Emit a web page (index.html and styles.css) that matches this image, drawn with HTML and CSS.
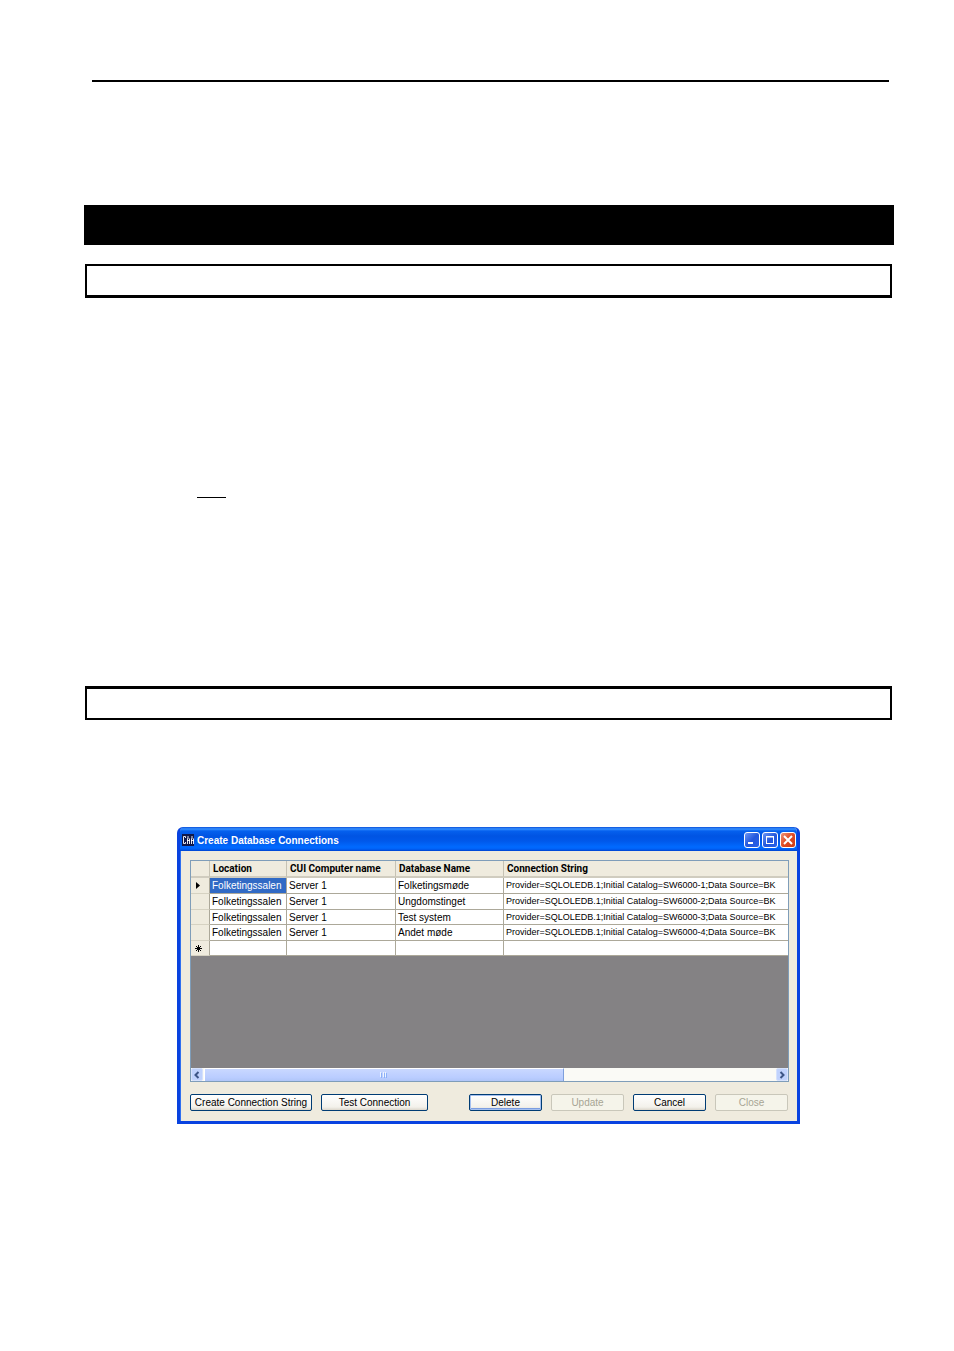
FILE: index.html
```html
<!DOCTYPE html>
<html lang="en">
<head>
<meta charset="utf-8">
<title>Create Database Connections</title>
<link rel="stylesheet" href="styles.css">
</head>
<body>
<main class="page">
  <hr class="rule">
  <div class="band"></div>
  <div class="frame frame-first"></div>
  <div class="underline"></div>
  <div class="frame frame-second"></div>

  <section class="window" aria-labelledby="window-title">
    <header class="titlebar">
      <svg class="app-icon" viewBox="0 0 12 12" aria-hidden="true">
        <rect width="12" height="12" fill="#10184a"/>
        <path d="M3.500 4V2.500h-2v7h2V8M5.500 10V4.500M6 2v3M7.500 10V4.500M5 6.500h3M9.500 10V4.500M10 2v3M11.500 10V4.500M9 6.500h3" fill="none" stroke="#fff" stroke-width=".9"/>
      </svg>
      <h1 class="title" id="window-title">Create Database Connections</h1>
      <button class="sys" type="button" aria-label="Minimize"><svg viewBox="0 0 16 16"><path d="M4 11h5" stroke="#fff" stroke-width="2"/></svg></button>
      <button class="sys" type="button" aria-label="Maximize"><svg viewBox="0 0 16 16"><path d="M4 5h8M4.500 4v8M11.500 4v8M4 11.500h8" stroke="#fff" fill="none"/><path d="M4 4.500h8" stroke="#fff"/></svg></button>
      <button class="sys sys-close" type="button" aria-label="Close window"><svg viewBox="0 0 16 16"><path d="M4 4l8 8M12 4l-8 8" stroke="#fff" stroke-width="2"/></svg></button>
    </header>

    <div class="content">
      <div class="grid">
        <table class="table">
          <thead>
            <tr><th class="col-mark"></th><th class="col-location">Location</th><th class="col-computer">CUI Computer name</th><th class="col-database">Database Name</th><th>Connection String</th></tr>
          </thead>
          <tbody>
            <tr><th><svg class="mark" viewBox="0 0 9 9" role="img" aria-label="Current row"><path d="M2 1v7l4-3.500z"/></svg></th><td class="selected">Folketingssalen</td><td>Server 1</td><td>Folketingsmøde</td><td class="connection">Provider=SQLOLEDB.1;Initial Catalog=SW6000-1;Data Source=BK</td></tr>
            <tr><th></th><td>Folketingssalen</td><td>Server 1</td><td>Ungdomstinget</td><td class="connection">Provider=SQLOLEDB.1;Initial Catalog=SW6000-2;Data Source=BK</td></tr>
            <tr><th></th><td>Folketingssalen</td><td>Server 1</td><td>Test system</td><td class="connection">Provider=SQLOLEDB.1;Initial Catalog=SW6000-3;Data Source=BK</td></tr>
            <tr><th></th><td>Folketingssalen</td><td>Server 1</td><td>Andet møde</td><td class="connection">Provider=SQLOLEDB.1;Initial Catalog=SW6000-4;Data Source=BK</td></tr>
            <tr><th><svg class="mark" viewBox="0 0 9 9" role="img" aria-label="New row"><path d="M4.500 1v7M1 4.500h7M2 2l5 5M7 2L2 7" stroke="#000"/></svg></th><td></td><td></td><td></td><td></td></tr>
          </tbody>
        </table>
        <div class="scrollbar">
          <button class="arrow" type="button" aria-label="Scroll left"><svg viewBox="0 0 12 12"><path d="M7.500 3l-3 3 3 3" fill="none" stroke="#3c5587" stroke-width="2"/></svg></button>
          <div class="track"><div class="thumb"><svg class="grip" viewBox="0 0 7 6"><path d="M.5 0v5M3.500 0v5M5.500 0v5" stroke="#eef4fe"/><path d="M1.500 1v5M4.500 1v5M6.500 1v5" stroke="#8cb0f8"/></svg></div></div>
          <button class="arrow" type="button" aria-label="Scroll right"><svg viewBox="0 0 12 12"><path d="M4.500 3l3 3-3 3" fill="none" stroke="#3c5587" stroke-width="2"/></svg></button>
        </div>
      </div>
      <div class="actions">
        <button class="btn btn-create" type="button">Create Connection String</button>
        <button class="btn btn-test" type="button">Test Connection</button>
        <div class="spacer"></div>
        <button class="btn btn-default" type="button">Delete</button>
        <button class="btn" type="button" disabled>Update</button>
        <button class="btn" type="button">Cancel</button>
        <button class="btn" type="button" disabled>Close</button>
      </div>
    </div>
  </section>
</main>
</body>
</html>
```
FILE: styles.css
```css
* { box-sizing: border-box; }

body {
  margin: 0;
  background: #fff;
  color: #000;
  font-family: "Liberation Sans", Arial, sans-serif;
  font-size: 10px;
}

button { font: inherit; padding: 0; }
svg { display: block; }

.page {
  display: flow-root;
  padding: 80px 60px 227px 84px;
}

.rule {
  height: 2px;
  margin: 0 5px 0 8px;
  border: 0;
  background: #000;
}

.band {
  height: 40px;
  margin-top: 123px;
  background: #000;
}

.frame {
  height: 34px;
  margin: 0 2px 0 1px;
  border: 2px solid #000;
}
.frame-first { margin-top: 19px; border-bottom-width: 3px; }
.frame-second { margin-top: 188px; border-top-width: 3px; }

.underline {
  width: 29px;
  height: 1px;
  margin: 199px 0 0 113px;
  background: #000;
}

/* Dialog window */
.window {
  margin: 107px 94px 0 93px;
  border: solid #0842e0;
  border-width: 0 3px 3px;
  border-radius: 6px 6px 0 0;
  background: #efebde;
  overflow: hidden;
  box-shadow: inset 1px 0 #2f6ff0;
}

.titlebar {
  display: flex;
  align-items: center;
  gap: 2px;
  height: 24px;
  margin: 0 -3px;
  padding: 2px 4px 0 5px;
  background: linear-gradient(#0a50d8 0, #3590ff 2px, #0560ee 4px, #0054e3 9px, #0058ea 14px, #006aff 20px, #0062f8 22px, #0043cf 24px);
}
.app-icon { width: 12px; height: 12px; }
.title {
  flex: 1;
  margin: 0;
  padding: 2px 0 0 1px;
  color: #fff;
  font: bold 10px/14px "Liberation Sans", Arial, sans-serif;
  white-space: nowrap;
}
.sys {
  width: 16px;
  height: 16px;
  border: 1px solid #fff;
  border-radius: 3px;
  background: linear-gradient(135deg, #6c96f5, #2458dd 50%, #2860e8);
}
.sys svg { width: 16px; height: 16px; margin: -1px; }
.sys-close { background: linear-gradient(135deg, #ee9478, #e04a22 50%, #cc3c14); }

.content { padding: 9px 8px 10px 10px; }

/* Data grid */
.grid {
  display: flex;
  flex-direction: column;
  height: 222px;
  border: 1px solid #7f9db9;
  background: #848284;
  overflow: hidden;
}

.table {
  width: 100%;
  table-layout: fixed;
  border-collapse: separate;
  border-spacing: 0;
  background: #fff;
  line-height: 13px;
}
.table th, .table td {
  height: 16px;
  padding: 0 2px;
  border: solid #aca899;
  border-width: 0 1px 1px 0;
  overflow: hidden;
  text-align: left;
  white-space: nowrap;
}
.table tr > :last-child { border-right: 0; }
.table thead th {
  height: 17px;
  padding: 1px 0 0 3px;
  border-right-color: #c6c2b4;
  border-bottom: 2px solid #d0ccbf;
  background: #efebde;
  font: bold 10px/14px Roboto, sans-serif;
}
.table tbody th {
  padding: 0 3px;
  background: #efebde;
  border-bottom-color: #d6d2c2;
}
.table tbody tr:nth-child(2n+3) > * { height: 15px; }
.table .selected { background: #316ac5; color: #fff; }
.table .connection { padding-right: 0; font-size: 9px; }
.col-mark { width: 19px; }
.col-location { width: 77px; }
.col-computer { width: 109px; }
.col-database { width: 108px; }
.mark { width: 9px; height: 9px; }

.scrollbar {
  display: flex;
  height: 13px;
  margin-top: auto;
  background: #fafaf6;
}
.arrow {
  width: 12px;
  height: 13px;
  border: 1px solid #d5e1fc;
  border-radius: 2px;
  background: #c0d2fd;
}
.arrow svg { width: 12px; height: 12px; margin: -1px; }
.track { flex: 1; padding: 0 1px; }
.thumb {
  display: flex;
  align-items: center;
  justify-content: center;
  width: 63%;
  height: 13px;
  border: solid #fff;
  border-width: 1px 0 0 1px;
  border-right: 1px solid #7e9fdc;
  background: linear-gradient(#c9d8ff, #bacdff 70%, #b0c6f8);
}
.grip { width: 7px; height: 6px; }

/* Command buttons */
.actions { display: flex; gap: 9px; margin: 12px 1px 0 0; }
.spacer { flex: 1; }
.btn {
  width: 73px;
  height: 17px;
  border: 1px solid #003c74;
  border-radius: 2px;
  background: linear-gradient(#fff, #f3f1eb 80%, #dcd7cc);
  color: #000;
  font-size: 10px;
  line-height: 15px;
  white-space: nowrap;
}
.btn-create { width: 122px; }
.btn-test { width: 107px; }
.btn-default { box-shadow: inset 0 0 0 1px #a5c0f0, inset 0 -2px #7c9de0; }
.btn:disabled { border-color: #c9c7ba; background: #f5f4ea; color: #a7a594; }
```
